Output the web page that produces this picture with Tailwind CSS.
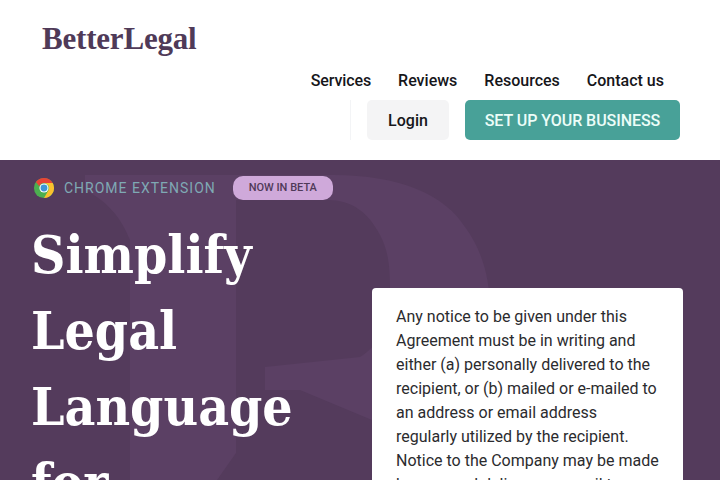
<!doctype html>
<html>
<head>
  <meta charset="UTF-8" />
  <meta name="viewport" content="width=device-width, initial-scale=1.0" />
  <script src="https://cdn.jsdelivr.net/npm/@tailwindcss/browser@4"></script>
</head>
<body class="bg-white overflow-hidden font-['Roboto',sans-serif]">
<div class="h-[480px] overflow-hidden">
  <!-- header -->
  <header class="h-[160px] bg-white pl-[42px] pr-[40px]">
    <div class="pt-[20px] font-['Liberation_Serif',serif] font-bold text-[31px] leading-[38px] tracking-[-0.2px] text-[#4f3a58]">BetterLegal</div>
    <nav class="flex justify-end gap-[27px] pr-[16px] mt-[13px] font-['Roboto',sans-serif] font-medium text-[16px] leading-[20px] text-[#16161a]">
      <a class="tracking-[-0.1px]">Services</a>
      <a>Reviews</a>
      <a>Resources</a>
      <a>Contact us</a>
    </nav>
    <div class="flex justify-end items-center mt-[9px]">
      <div class="w-px h-[40px] bg-gray-100 mr-[16px]"></div>
      <button class="w-[82px] h-[40px] pt-[2px] rounded-[5px] bg-[#f4f4f5] font-['Roboto',sans-serif] font-medium text-[16px] text-[#16161a]">Login</button>
      <button class="ml-[16px] w-[215px] h-[40px] pt-[2px] rounded-[5px] bg-[#48a198] font-['Roboto',sans-serif] font-medium text-[16px] tracking-[-0.05px] text-[#ecfdf8]">SET UP YOUR BUSINESS</button>
    </div>
  </header>

  <!-- hero -->
  <section class="relative h-[320px] bg-[#543b5c] overflow-hidden">
    <svg class="absolute left-0 top-0" width="720" height="320" viewBox="0 0 720 320">
      <path fill="#5b4064" d="M85 15H333C400 15 445 35 465 67C482 90 490 118 490 150V260H372L300 230H265V207L360 197C380 185 390 165 390 130C390 105 388 90 380 75C368 52 352 40 327 40H236V293L217 320H130V80C120 55 105 40 85 30Z"/>
    </svg>
    <div class="relative flex items-center pl-[33px] pt-[16px]">
      <svg width="22" height="22" viewBox="0 0 48 48">
        <circle cx="24" cy="24" r="22" fill="#4caf50"/>
        <path fill="#ea4335" d="M24 2a22 22 0 0 1 19 11H24a11 11 0 0 0-10.400 7.400L6.500 10.700A22 22 0 0 1 24 2z"/>
        <path fill="#fbc02d" d="M43 13a22 22 0 0 1-19 33l9.500-16.500A11 11 0 0 0 33.500 18.500 11 11 0 0 0 24 13z"/>
        <circle cx="24" cy="24" r="10" fill="#fff"/>
        <circle cx="24" cy="24" r="7.500" fill="#3f95d6"/>
      </svg>
      <span class="ml-[9px] text-[14px] tracking-[1px] text-[#7fa9b4]">CHROME EXTENSION</span>
      <span class="ml-[17px] w-[100px] h-[24px] flex items-center justify-center rounded-[10px] bg-[#cfa9da] font-medium text-[11px] text-[#4f3a58]">NOW IN BETA</span>
    </div>
    <div class="relative flex justify-between pl-[31px] pr-[37px]">
      <h1 class="mt-[16px] w-[320px] font-['DejaVu_Serif',serif] font-stretch-condensed font-bold text-[53px] leading-[76px] text-white">Simplify Legal Language for</h1>
      <div class="mt-[88px] w-[311px] h-[300px] rounded-[4px] bg-white px-[24px] pt-[17px] text-[16px] leading-[24px] text-[#2b2b2e]">
        Any notice to be given under this Agreement must be in writing and either (a) personally delivered to the recipient, or (b) mailed or e-mailed to an address or email address regularly utilized by the recipient. Notice to the Company may be made by personal delivery or e-mail to
      </div>
    </div>
  </section>
</div>
</body>
</html>
